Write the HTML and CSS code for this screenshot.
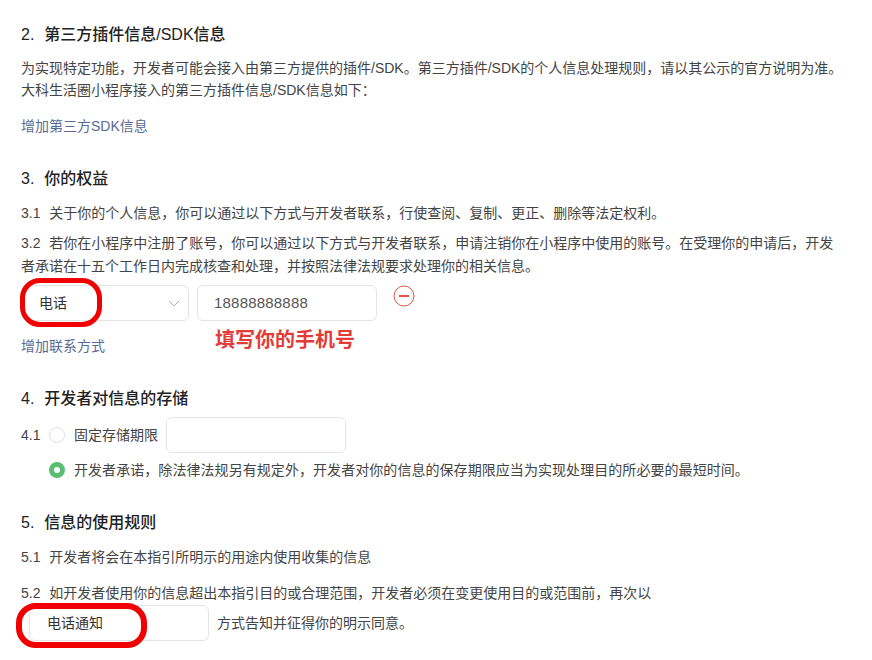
FILE: index.html
```html
<!DOCTYPE html>
<html lang="en">

<head>
    <meta charset="UTF-8">
    <meta name="viewport" content="width=device-width, initial-scale=1.0">
    <title>用户隐私保护指引</title>
    <link rel="stylesheet" href="styles.css">
</head>

<body>
    <div class="section sec-2">
        <h3>2.&nbsp; 第三方插件信息/SDK信息</h3>
        <p class="intro">为实现特定功能，开发者可能会接入由第三方提供的插件/SDK。第三方插件/SDK的个人信息处理规则，请以其公示的官方说明为准。<br>大科生活圈小程序接入的第三方插件信息/SDK信息如下：</p>
        <a class="link link-sdk">增加第三方SDK信息</a>
    </div>

    <div class="section sec-3">
        <h3>3.&nbsp; 你的权益</h3>
        <p class="item-31">3.1&nbsp; 关于你的个人信息，你可以通过以下方式与开发者联系，行使查阅、复制、更正、删除等法定权利。</p>
        <p class="item-32">3.2&nbsp; 若你在小程序中注册了账号，你可以通过以下方式与开发者联系，申请注销你在小程序中使用的账号。在受理你的申请后，开发者承诺在十五个工作日内完成核查和处理，并按照法律法规要求处理你的相关信息。</p>
        <div class="contact-row">
            <div class="select">
                <span>电话</span>
                <svg class="arrow" width="12" height="7" viewBox="0 0 12 7"><path d="M1 1l5 5 5-5" fill="none" stroke="#b0b0b0" stroke-width="1"/></svg>
            </div>
            <div class="input input-phone">18888888888</div>
            <svg class="minus" width="22" height="22" viewBox="0 0 22 22"><circle cx="11" cy="11" r="10" fill="none" stroke="#e5534b" stroke-width="1"/><path d="M6 11h10" stroke="#e5534b" stroke-width="2"/></svg>
            <span class="mark mark-phone"></span>
            <span class="note">填写你的手机号</span>
        </div>
        <a class="link link-contact">增加联系方式</a>
    </div>

    <div class="section sec-4">
        <h3>4.&nbsp; 开发者对信息的存储</h3>
        <div class="radio-row">
            <span class="num">4.1</span>
            <span class="radio"></span>
            <span>固定存储期限</span>
            <div class="input input-term"></div>
        </div>
        <div class="radio-row radio-row-2">
            <span class="radio checked"></span>
            <span>开发者承诺，除法律法规另有规定外，开发者对你的信息的保存期限应当为实现处理目的所必要的最短时间。</span>
        </div>
    </div>

    <div class="section sec-5">
        <h3>5.&nbsp; 信息的使用规则</h3>
        <p class="item-51">5.1&nbsp; 开发者将会在本指引所明示的用途内使用收集的信息</p>
        <p class="item-52">5.2&nbsp; 如开发者使用你的信息超出本指引目的或合理范围，开发者必须在变更使用目的或范围前，再次以</p>
        <div class="notice-row">
            <div class="input input-notice">电话通知</div>
            <span>方式告知并征得你的明示同意。</span>
            <span class="mark mark-notice"></span>
        </div>
    </div>
</body>

</html>
```

FILE: styles.css
```css
body {
    margin: 0;
    padding: 0 21px;
    background-color: #fff;
    font-family: "Liberation Sans", "Noto Sans CJK SC", sans-serif;
    font-size: 14px;
    line-height: 23px;
    color: #444;
    overflow: hidden;
    height: 660px;
    box-sizing: border-box;
}

h3 {
    margin: 0;
    font-size: 16px;
    font-weight: 500;
    line-height: 24px;
    color: #222;
    word-spacing: 0.5px;
}

p {
    margin: 0;
    word-spacing: 0.5px;
}

.link {
    display: block;
    color: #576b95;
}

.section {
    position: relative;
}

.sec-2 {
    padding-top: 23px;
}

.intro {
    margin-top: 10px;
    line-height: 22px;
}

.link-sdk {
    margin-top: 14px;
}

.sec-3 {
    padding-top: 29px;
}

.item-31 {
    margin-top: 11px;
}

.item-32 {
    margin-top: 7px;
    margin-right: 10px;
}

.contact-row {
    position: relative;
    display: flex;
    margin-top: 7px;
    margin-left: 1px;
}

.select,
.input {
    box-sizing: border-box;
    height: 36px;
    border: 1px solid #e4e4e4;
    border-radius: 6px;
    line-height: 34px;
}

.select {
    display: flex;
    align-items: center;
    justify-content: space-between;
    width: 167px;
    padding: 0 8px 0 16px;
    color: #333;
}

.input-phone {
    width: 180px;
    margin-left: 8px;
    padding-left: 16px;
    font-size: 15px;
    color: #555;
    letter-spacing: 0.2px;
}

.minus {
    margin-left: 16px;
}

.note {
    position: absolute;
    left: 193px;
    top: 42px;
    font-size: 20px;
    font-weight: 700;
    line-height: 26px;
    color: #e23c39;
}

.mark {
    position: absolute;
    box-sizing: border-box;
    border: 5px solid #f00000;
    border-radius: 20px;
}

.mark-phone {
    left: -2px;
    top: -7px;
    width: 82px;
    height: 49px;
}

.link-contact {
    margin-top: 14px;
}

.sec-4 {
    padding-top: 29px;
}

.radio-row {
    display: flex;
    align-items: center;
    margin-top: 6px;
    height: 36px;
}

.radio-row-2 {
    margin-top: 0;
    height: 34px;
    padding-left: 28px;
    letter-spacing: 0.06px;
}

.num {
    width: 28px;
}

.radio {
    box-sizing: border-box;
    flex: none;
    width: 16px;
    height: 16px;
    margin-right: 9px;
    border: 1px solid #e0e0e0;
    border-radius: 50%;
}

.radio.checked {
    border: 5px solid #5bbd72;
    background-color: #fff;
}

.input-term {
    width: 180px;
    margin-left: 8px;
}

.sec-5 {
    padding-top: 24px;
}

.item-51 {
    margin-top: 11px;
}

.item-52 {
    margin-top: 13px;
}

.notice-row {
    position: relative;
    display: flex;
    align-items: center;
    margin-left: 8px;
}

.input-notice {
    width: 180px;
    padding-left: 17px;
    margin-right: 8px;
    color: #333;
}

.mark-notice {
    left: -13px;
    top: -2px;
    width: 131px;
    height: 45px;
    border-width: 6px;
}
```
